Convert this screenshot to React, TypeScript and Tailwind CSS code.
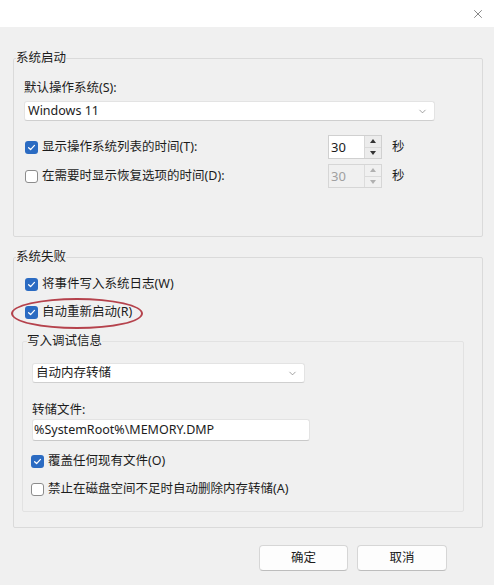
import { X, ChevronDown } from 'lucide-react';

const Box = ({ on }: { on: boolean }) =>
    on ? (
        <span className="w-[13px] h-[13px] rounded-[3px] bg-[#2b6bc2] flex items-center justify-center shrink-0">
            <svg width="9" height="9" viewBox="0 0 10 10" fill="none">
                <path d="M1.8 5.2 L4 7.3 L8.3 2.7" stroke="white" strokeWidth="1.4" strokeLinecap="round" strokeLinejoin="round" />
            </svg>
        </span>
    ) : (
        <span className="w-[13px] h-[13px] rounded-[3px] bg-white border border-[#8c8c8c] shrink-0" />
    );

const Check = ({ on, text }: { on: boolean; text: string }) => (
    <div className="flex items-center gap-[4px] h-[18px]">
        <Box on={on} />
        <span>{text}</span>
    </div>
);

const Select = ({ value, w, big }: { value: string; w: string; big?: boolean }) => (
    <div className={`${w} h-[20px] bg-white border border-[#e3e3e3] border-b-[#cfcfcf] rounded-[3px] flex items-center justify-between pl-[3px] pr-[6px]`}>
        <span className={big ? 'text-[12.5px]' : ''}>{value}</span>
        <ChevronDown className="w-[11px] h-[11px] text-[#777]" strokeWidth={1.5} />
    </div>
);

const Spin = ({ disabled }: { disabled?: boolean }) => (
    <div className={`w-[54px] h-[24px] flex border ${disabled ? 'border-[#d6d6d6] bg-[#f0f0f0]' : 'border-[#d0d0d0] bg-white'}`}>
        <div className={`flex-1 pl-[2px] flex items-center text-[13px] ${disabled ? 'text-[#a0a0a0]' : ''}`}>30</div>
        <div className={`w-[17px] flex flex-col border-l ${disabled ? 'border-[#dcdcdc]' : 'border-[#d8d8d8] bg-[#ececec]'}`}>
            <div className="flex-1 flex items-center justify-center">
                <svg width="6" height="4" viewBox="0 0 6 4"><path d="M0 4 L3 0 L6 4Z" fill={disabled ? '#b0b0b0' : '#333'} /></svg>
            </div>
            <div className="flex-1 flex items-center justify-center border-t border-[#dadada]">
                <svg width="6" height="4" viewBox="0 0 6 4"><path d="M0 0 L3 4 L6 0Z" fill={disabled ? '#b0b0b0' : '#333'} /></svg>
            </div>
        </div>
    </div>
);

export default function App() {
    return (
        <div
            className="relative w-[494px] h-[585px] bg-[#f0f0f0] text-[#1c1c1c] text-[12.5px] leading-[16px] flex flex-col overflow-hidden"
            style={{ fontFamily: '"Noto Sans", "Noto Sans CJK SC", sans-serif' }}
        >
            {/* barra de título */}
            <div className="h-[27px] bg-white flex items-center justify-end pr-[9px] shrink-0">
                <X className="w-[14px] h-[14px] text-[#555]" strokeWidth={1.2} />
            </div>

            <div className="pl-[13px] pr-[11px]">
                <fieldset className="mt-[23px] border border-[#dadada] rounded-[2px]">
                    <legend className="ml-[2px] px-0 leading-[16px]">系统启动</legend>
                    <div className="pl-[10px] pr-[46px] pb-[48px]">
                        <div className="mt-[14px]">默认操作系统(S):</div>
                        <div className="mt-[5px]">
                            <Select value="Windows 11" w="w-[411px]" big />
                        </div>
                        <div className="mt-[14px] flex items-center">
                            <div className="w-[304px] pl-px"><Check on text="显示操作系统列表的时间(T):" /></div>
                            <Spin />
                            <span className="ml-[10px]">秒</span>
                        </div>
                        <div className="mt-[5px] flex items-center">
                            <div className="w-[304px] pl-px"><Check on={false} text="在需要时显示恢复选项的时间(D):" /></div>
                            <Spin disabled />
                            <span className="ml-[10px]">秒</span>
                        </div>
                    </div>
                </fieldset>

                <fieldset className="mt-[12px] border border-[#dadada] rounded-[2px]">
                    <legend className="ml-[2px] px-0 leading-[16px]">系统失败</legend>
                    <div className="pl-[8px] pr-[18px] pb-[15px]">
                        <div className="mt-[10px] pl-[3px]"><Check on text="将事件写入系统日志(W)" /></div>
                        <div className="mt-[10px] pl-[3px]"><Check on text="自动重新启动(R)" /></div>

                        <fieldset className="mt-[12px] border border-[#e2e2e2] rounded-[2px]">
                            <legend className="ml-[4px] px-0 leading-[16px]">写入调试信息</legend>
                            <div className="pl-[9px] pb-[13px]">
                                <div className="mt-[14px]">
                                    <Select value="自动内存转储" w="w-[273px]" />
                                </div>
                                <div className="mt-[19px]">转储文件:</div>
                                <div className="mt-[1px] w-[278px] h-[22px] bg-white border border-[#e3e3e3] border-b-[#c9c9c9] rounded-[3px] flex items-center pl-[1px] text-[12.5px]">
                                    %SystemRoot%\MEMORY.DMP
                                </div>
                                <div className="mt-[11px] -ml-px"><Check on text="覆盖任何现有文件(O)" /></div>
                                <div className="mt-[10px] -ml-px"><Check on={false} text="禁止在磁盘空间不足时自动删除内存转储(A)" /></div>
                            </div>
                        </fieldset>
                    </div>
                </fieldset>

                <div className="mt-[17px] flex justify-end gap-[9px] pr-[36px]">
                    <button className="w-[89px] h-[26px] bg-[#fdfdfd] border border-[#d6d6d6] border-b-[#bdbdbd] rounded-[4px]">确定</button>
                    <button className="w-[90px] h-[26px] bg-[#fdfdfd] border border-[#d6d6d6] border-b-[#bdbdbd] rounded-[4px]">取消</button>
                </div>
            </div>

            {/* marca vermelha de destaque */}
            <div className="absolute left-[11px] top-[298px] w-[132px] h-[31px] rounded-[50%] border-2 border-[#b5424c] pointer-events-none" />
        </div>
    );
}
